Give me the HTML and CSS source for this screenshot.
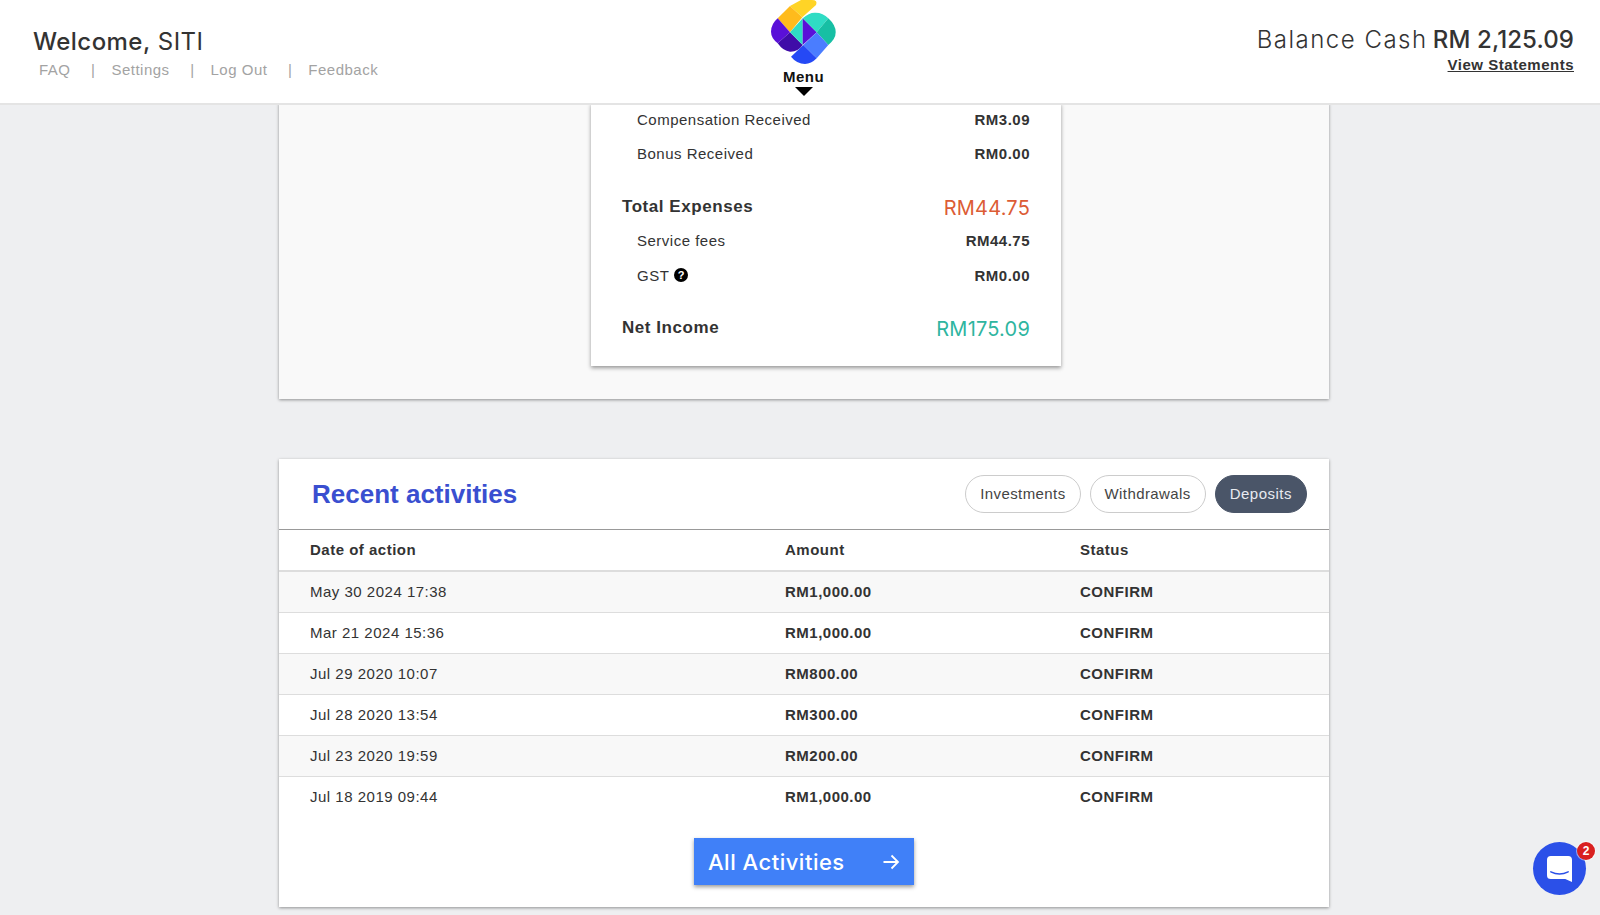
FILE: index.html
```html
<!DOCTYPE html>
<html lang="en">
<head>
  <meta charset="UTF-8">
  <title>Dashboard</title>
  <link rel="stylesheet" href="styles.css">
</head>
<body>

<header class="topbar">
  <div class="welcome">
    <div class="welcome-name"><strong>Welcome,</strong> SITI</div>
    <nav class="top-links">
      <a>FAQ</a><span>|</span><a>Settings</a><span>|</span><a>Log Out</a><span>|</span><a>Feedback</a>
    </nav>
  </div>
  <div class="menu">
    <svg class="logo" viewBox="0 0 66 66" width="66" height="66">
      <path fill="#ffd426" d="M19 6 30 0H41Q47 0 45 5L31.3 17.3Z"/>
      <path fill="#ffbb1c" d="M6.7 18.3 19 6 31.3 17.3 19 32.3Z"/>
      <path fill="#5a10d8" d="M6.7 18.3 19 32.3 6.7 43.3Q0 38 0 31.7 0 24 6.7 18.3Z"/>
      <path fill="#3f0ca8" d="M19 32.3 31.7 45Q27 52 19 51.7 12 51 6.7 43.3Z"/>
      <path fill="#2fdcc4" d="M19 32.3 31.7 18.3V45Z"/>
      <path fill="#5a10d8" d="M31.7 18.3 45.7 32.3 31.7 45Z"/>
      <path fill="#2fdcc4" d="M31.7 18.3Q38 12.5 44 12.7 52 12.5 57.3 18.3L45.7 32.3Z"/>
      <path fill="#17bfa4" d="M57.3 18.3Q64.7 25 64.7 32.3 64.7 39 57.3 45L45.7 32.3Z"/>
      <path fill="#4a7dff" d="M45.7 32.3 57.3 45 45.7 58.3 32.3 45Z"/>
      <path fill="#2549f5" d="M32.3 45 45.7 58.3Q40 64 34 64 26 64 20 56.7Z"/>
    </svg>
    <div class="menu-label">Menu</div>
    <div class="menu-caret"></div>
  </div>
  <div class="balance">
    <div class="balance-line">Balance Cash <strong>RM 2,125.09</strong></div>
    <a class="statements">View Statements</a>
  </div>
</header>

<main class="content">
  <section class="panel summary-panel">
    <div class="summary-card">
      <div class="line sub first"><span>Compensation Received</span><b>RM3.09</b></div>
      <div class="line sub"><span>Bonus Received</span><b>RM0.00</b></div>
      <div class="line total"><strong>Total Expenses</strong><em class="red">RM44.75</em></div>
      <div class="line sub"><span>Service fees</span><b>RM44.75</b></div>
      <div class="line sub">
        <span class="gst">GST
          <svg viewBox="0 0 14 14" width="14" height="14"><circle cx="7" cy="7" r="7" fill="#000"/><text x="7" y="11" class="qmark">?</text></svg>
        </span>
        <b>RM0.00</b>
      </div>
      <div class="line total net"><strong>Net Income</strong><em class="green">RM175.09</em></div>
    </div>
  </section>

  <section class="panel activities">
    <div class="activities-head">
      <h2>Recent activities</h2>
      <div class="pills">
        <button class="pill">Investments</button>
        <button class="pill">Withdrawals</button>
        <button class="pill active">Deposits</button>
      </div>
    </div>
    <table>
      <thead>
        <tr><th>Date of action</th><th>Amount</th><th>Status</th></tr>
      </thead>
      <tbody>
        <tr><td>May 30 2024 17:38</td><td>RM1,000.00</td><td>CONFIRM</td></tr>
        <tr><td>Mar 21 2024 15:36</td><td>RM1,000.00</td><td>CONFIRM</td></tr>
        <tr><td>Jul 29 2020 10:07</td><td>RM800.00</td><td>CONFIRM</td></tr>
        <tr><td>Jul 28 2020 13:54</td><td>RM300.00</td><td>CONFIRM</td></tr>
        <tr><td>Jul 23 2020 19:59</td><td>RM200.00</td><td>CONFIRM</td></tr>
        <tr><td>Jul 18 2019 09:44</td><td>RM1,000.00</td><td>CONFIRM</td></tr>
      </tbody>
    </table>
    <div class="all-row">
      <a class="all-button">All Activities
        <svg viewBox="0 0 18 18" width="18" height="18"><path d="M1.5 9H16M9.5 2.5 16 9l-6.5 6.5" fill="none" stroke="#fff" stroke-width="1.8"/></svg>
      </a>
    </div>
  </section>
</main>

<div class="chat">
  <svg viewBox="0 0 26 27" width="25" height="26">
    <path fill="#fff" d="M4 0H22Q26 0 26 4V27L19 24H4Q0 24 0 20V4Q0 0 4 0Z"/>
    <path fill="none" stroke="#2b50e8" stroke-width="1.6" stroke-linecap="round" d="M4 16.5Q13 21 22 16.5"/>
  </svg>
  <span class="chat-badge">2</span>
</div>

</body>
</html>
```

FILE: styles.css
```css
html, body {
  margin: 0;
  height: 915px;
  overflow: hidden;
}
body {
  font-family: "Liberation Sans", Arial, sans-serif;
  background-color: #eeeff1;
  color: #333;
  letter-spacing: 0.5px;
}
.topbar {
  position: relative;
  z-index: 2;
  height: 105px;
  box-sizing: border-box;
  background-color: #fff;
  border-bottom: 2px solid #e4e4e4;
  display: grid;
  grid-template-columns: 1fr 66px 1fr;
  padding: 0 26px 0 33px;
}
.welcome {
  padding-top: 26px;
}
.welcome-name {
  font-family: Inter, sans-serif;
  font-size: 24px;
  line-height: 32px;
  letter-spacing: 0.45px;
  color: #333;
}
.welcome-name strong {
  font-weight: 500;
}
.top-links {
  display: flex;
  gap: 16px;
  padding-left: 6px;
  margin-top: 2px;
  font-size: 15px;
  line-height: 20px;
  color: #a3a3a3;
}
.top-links span {
  margin-left: 4.5px;
}
.menu {
  display: flex;
  flex-direction: column;
  align-items: center;
}
.logo {
  display: block;
}
.menu-label {
  margin-top: 3px;
  font-size: 15px;
  line-height: 16px;
  font-weight: bold;
  color: #111;
}
.menu-caret {
  margin-top: 2px;
  border-left: 9px solid transparent;
  border-right: 9px solid transparent;
  border-top: 9px solid #000;
}
.balance {
  text-align: right;
  padding-top: 24px;
}
.balance-line {
  font-family: Inter, sans-serif;
  font-size: 24px;
  font-weight: 300;
  line-height: 32px;
  letter-spacing: 1.5px;
}
.balance-line strong {
  margin-left: -3px;
  font-weight: 500;
  letter-spacing: 0.1px;
}
.statements {
  display: block;
  font-size: 15px;
  line-height: 18px;
  font-weight: bold;
  text-decoration: underline;
}
.content {
  width: 1050px;
  margin: -2px 0 0 279px;
}
.panel {
  box-shadow: 0 1px 3px rgba(0, 0, 0, 0.4);
}
.summary-panel {
  height: 296px;
  background-color: #f9f9f9;
  display: flex;
  padding-left: 312px;
  margin-bottom: 60px;
}
.summary-card {
  width: 470px;
  height: 263px;
  box-sizing: border-box;
  padding: 0 31px;
  background-color: #fff;
  box-shadow: 0 2px 4px rgba(0, 0, 0, 0.4);
}
.line {
  display: flex;
  justify-content: space-between;
  align-items: center;
}
.line.sub {
  height: 34.5px;
  padding-left: 15px;
  font-size: 15px;
}
.line.sub.first {
  margin-top: -1px;
}
.line.total {
  height: 33px;
  margin-top: 19.5px;
  font-size: 17px;
  letter-spacing: 0.55px;
}
.line.total.net {
  margin-top: 19px;
}
.line em {
  padding-top: 2px;
  font-family: Inter, sans-serif;
  font-style: normal;
  font-size: 20px;
  letter-spacing: 0.2px;
}
.red {
  color: #dc5c35;
}
.green {
  color: #2fb5a0;
}
.gst {
  display: flex;
  align-items: center;
  gap: 5px;
}
.qmark {
  font-family: "Liberation Sans", sans-serif;
  font-size: 11px;
  font-weight: bold;
  fill: #fff;
  text-anchor: middle;
  letter-spacing: 0;
}
.activities {
  height: 448px;
  background-color: #fff;
}
.activities-head {
  height: 70px;
  display: flex;
  justify-content: space-between;
  align-items: center;
  padding: 0 22px 0 33px;
  border-bottom: 1px solid #999;
}
.activities-head h2 {
  margin: 0;
  font-size: 26px;
  font-weight: bold;
  letter-spacing: 0;
  color: #3a4fd0;
}
.pills {
  display: flex;
  gap: 9px;
}
.pill {
  height: 38px;
  padding: 0 14px 1px;
  font-family: "Liberation Sans", sans-serif;
  font-size: 15px;
  letter-spacing: 0.4px;
  color: #444;
  background-color: #fff;
  border: 1px solid #ccc;
  border-radius: 19px;
}
.pill.active {
  color: #e8eaf0;
  background-color: #4a5568;
  border-color: #4a5568;
  letter-spacing: 0.5px;
}
table {
  width: 100%;
  border-collapse: collapse;
  table-layout: fixed;
  font-size: 15px;
}
th, td {
  padding: 0 0 0 31px;
  text-align: left;
  box-sizing: border-box;
}
th:nth-child(1), td:nth-child(1) {
  width: 475px;
}
th:nth-child(2), td:nth-child(2) {
  width: 295px;
}
th {
  height: 41px;
  padding-bottom: 2px;
  border-bottom: 2px solid #ddd;
}
td {
  height: 41px;
  border-bottom: 1px solid #ddd;
}
td:nth-child(n+2) {
  font-weight: bold;
}
tbody tr:nth-child(odd) {
  background-color: #f8f8f8;
}
tbody tr:last-child td {
  border-bottom: none;
}
.all-row {
  display: flex;
  justify-content: center;
  padding-top: 21px;
}
.all-button {
  width: 220px;
  height: 47px;
  box-sizing: border-box;
  padding: 1px 14px 0;
  display: flex;
  justify-content: space-between;
  align-items: center;
  font-family: Inter, sans-serif;
  font-size: 22px;
  font-weight: 500;
  letter-spacing: 0.5px;
  color: #fff;
  background-color: #4080f8;
  box-shadow: 0 2px 4px rgba(0, 0, 0, 0.4);
}
.chat {
  position: absolute;
  left: 1533px;
  top: 842px;
  width: 53px;
  height: 53px;
  border-radius: 50%;
  background-color: #2b50e8;
  display: flex;
  align-items: center;
  justify-content: center;
}
.chat-badge {
  position: absolute;
  right: -9px;
  top: 0;
  width: 18px;
  height: 18px;
  border-radius: 50%;
  background-color: #d92020;
  box-shadow: 0 0 0 1px rgba(255, 255, 255, 0.5);
  color: #fff;
  font-size: 12px;
  font-weight: bold;
  line-height: 18px;
  text-align: center;
  letter-spacing: 0;
}
```
